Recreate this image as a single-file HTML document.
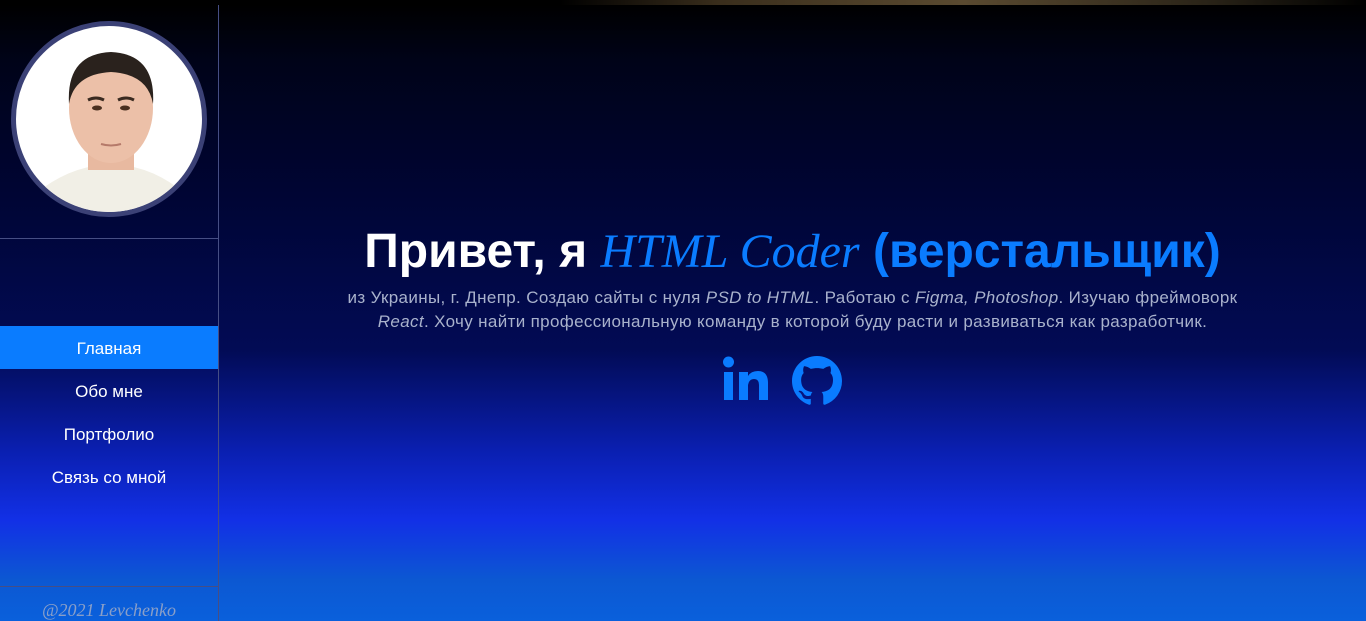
<!DOCTYPE html>
<html><head><meta charset="utf-8"><style>
*{margin:0;padding:0;box-sizing:border-box}
body{width:1366px;height:621px;overflow:hidden;font-family:"Liberation Sans","DejaVu Sans",sans-serif;
background:linear-gradient(to bottom,#000 0px,#000 5px,#000318 60px,#000535 200px,#020b55 350px,#0a1fb0 450px,#1230e6 520px,#0c58d2 580px,#0a60dc 621px);position:relative}
.top{position:absolute;left:560px;top:0;width:806px;height:5px;background:linear-gradient(90deg,#000,#3a2e1c 20%,#5a4a30 50%,#2a2418 80%,#000)}
.side{position:absolute;left:0;top:5px;width:219px;height:616px;border-right:1px solid #464e84}
.photo{position:absolute;left:11px;top:16px;width:196px;height:196px;border-radius:50%;border:5px solid #3b4176;background:#fff;overflow:hidden}
.hr{position:absolute;left:0;width:218px;height:1px;background:#464e84}
.nav{position:absolute;left:0;width:218px;height:43px;line-height:45px;text-align:center;color:#fff;font-size:17px}
.act{background:#0a7cff}
.foot{position:absolute;left:0;top:600px;width:218px;text-align:center;color:#8a9fc8;font-style:italic;font-size:18px;font-family:"Liberation Serif",serif}
.main{position:absolute;left:219px;right:0;text-align:center}
h1{position:absolute;top:224px;left:0;right:0;color:#fff;font-size:48px;font-weight:bold;white-space:nowrap}
h1 i{color:#0a7cff;font-family:"Liberation Serif",serif;font-weight:normal}
h1 span{color:#0a7cff}
p{position:absolute;top:286px;left:0;right:0;color:#a9b2cc;font-size:17px;letter-spacing:0.35px;line-height:24px;white-space:nowrap}
</style></head><body>
<div class="top"></div>
<div class="side">
<div class="photo"><svg width="186" height="186" viewBox="0 0 186 186">
<path d="M10 175 Q45 145 78 140 L112 140 Q145 145 178 175 L178 186 L10 186Z" fill="#f1efe6"/>
<rect x="72" y="110" width="46" height="34" fill="#e8b9a0"/>
<ellipse cx="95" cy="82" rx="42" ry="55" fill="#ecc0a8"/>
<path d="M53 78 Q50 28 95 26 Q140 28 137 78 Q132 48 95 46 Q58 48 53 78Z" fill="#2a221d"/>
<path d="M72 74 Q80 70 88 74" stroke="#3a2a20" stroke-width="3" fill="none"/><path d="M102 74 Q110 70 118 74" stroke="#3a2a20" stroke-width="3" fill="none"/>
<ellipse cx="81" cy="82" rx="5" ry="2.5" fill="#4a3020"/><ellipse cx="109" cy="82" rx="5" ry="2.5" fill="#4a3020"/>
<path d="M85 118 Q95 121 105 118" stroke="#b57a6a" stroke-width="2" fill="none"/>
</svg></div>
<div class="hr" style="top:233px"></div>
<div class="nav act" style="top:321px">Главная</div>
<div class="nav" style="top:364px">Обо мне</div>
<div class="nav" style="top:407px">Портфолио</div>
<div class="nav" style="top:450px">Связь со мной</div>
<div class="hr" style="top:581px"></div>
</div>
<div class="foot">@2021 Levchenko</div>
<div class="main" style="top:0;height:621px">
<h1>Привет, я <i>HTML Coder</i> <span>(верстальщик)</span></h1>
<p>из Украины, г. Днепр. Создаю сайты с нуля <i>PSD to HTML</i>. Работаю с <i>Figma, Photoshop</i>. Изучаю фреймоворк<br><i>React</i>. Хочу найти профессиональную команду в которой буду расти и развиваться как разработчик.</p>
<svg style="position:absolute;left:503px;top:356px" width="48" height="46" viewBox="0 0 48 46"><rect x="2" y="16" width="9" height="28" fill="#0a7cff"/><circle cx="6.5" cy="6" r="5.5" fill="#0a7cff"/><path d="M17 16h9v4q3-5 10-5q10 0 10 12v17h-9V29q0-6-5-6t-6 6v15h-9Z" fill="#0a7cff"/></svg>
<svg style="position:absolute;left:573px;top:356px" width="50" height="50" viewBox="0 0 16 16"><path fill="#0a7cff" d="M8 0C3.58 0 0 3.58 0 8c0 3.54 2.29 6.53 5.47 7.59.4.07.55-.17.55-.38 0-.19-.01-.82-.01-1.49-2.01.37-2.53-.49-2.69-.94-.09-.23-.48-.94-.82-1.13-.28-.15-.68-.52-.01-.53.63-.01 1.08.58 1.230.82.72 1.21 1.87.87 2.33.66.07-.52.28-.87.51-1.07-1.78-.2-3.64-.89-3.64-3.95 0-.87.31-1.59.82-2.15-.08-.2-.36-1.02.08-2.12 0 0 .67-.21 2.2.82.64-.18 1.32-.27 2-.27.68 0 1.36.09 2 .27 1.53-1.04 2.2-.82 2.2-.82.44 1.1.16 1.92.08 2.12.51.56.82 1.27.82 2.15 0 3.07-1.87 3.75-3.65 3.95.29.25.54.73.54 1.48 0 1.07-.01 1.93-.01 2.2 0 .21.15.46.55.38A8.013 8.013 0 0016 8c0-4.42-3.58-8-8-8z"/></svg>
</div>
</body></html>
